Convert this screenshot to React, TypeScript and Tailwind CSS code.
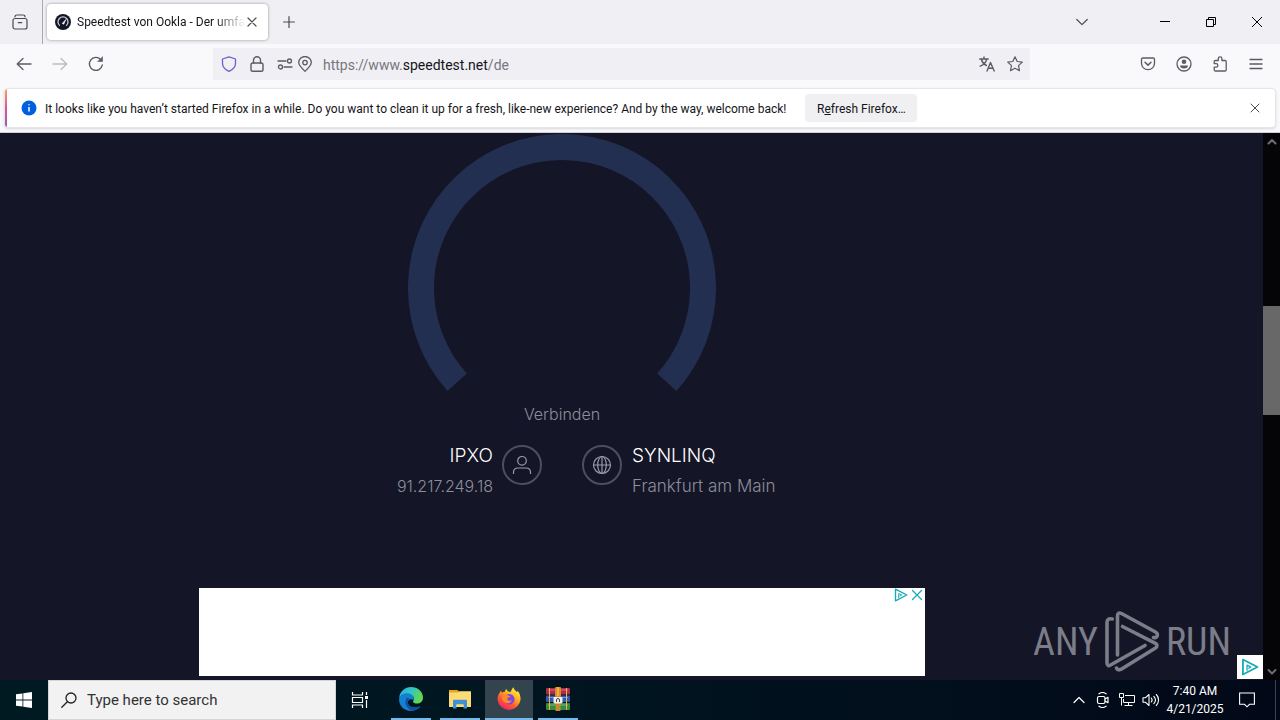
import React from "react";

type IconProps = { children: React.ReactNode; className?: string; box?: string; sw?: number };

function Icon({ children, className = "w-4 h-4", box = "0 0 16 16", sw = 1.2 }: IconProps) {
  return (
    <svg
      viewBox={box}
      className={`shrink-0 ${className}`}
      fill="none"
      stroke="currentColor"
      strokeWidth={sw}
      strokeLinecap="round"
      strokeLinejoin="round"
      aria-hidden="true"
    >
      {children}
    </svg>
  );
}

function IconButton({ label, className = "w-8 h-8", children }: { label: string; className?: string; children: React.ReactNode }) {
  return (
    <button type="button" aria-label={label} className={`flex shrink-0 items-center justify-center ${className}`}>
      {children}
    </button>
  );
}

function TabBar() {
  return (
    <header className="flex h-11 shrink-0 items-center bg-[#f0f0f4] text-[#4b4a53]">
      <IconButton label="Firefox View" className="h-11 w-10">
        <Icon sw={1.2}>
          <path d="M3 2.800C3 1.700 3.800 1 5 1h6c1.200 0 2 .7 2 1.800" />
          <rect x="1" y="4.500" width="14" height="10.500" rx="2" />
          <path d="M6.300 8.700h3.400" />
        </Icon>
      </IconButton>
      <div className="ml-0.5 h-11 w-px bg-[#a9a9b0]" />
      <div className="ml-1 flex h-9 w-[221px] items-center rounded bg-white pl-2 pr-2 shadow-[0_0_3px_rgba(0,0,0,0.4)]">
        <svg viewBox="0 0 16 16" className="h-4 w-4 shrink-0" aria-hidden="true">
          <circle cx="8" cy="8" r="8" fill="#141526" />
          <path d="M4.800 11.800A5 5 0 1 1 11.200 11.800" fill="none" stroke="#c9cad6" strokeWidth="1.300" />
          <path d="M7.200 9.400 11 5.400 8.700 10.200z" fill="#fff" stroke="#fff" strokeWidth=".6" />
        </svg>
        <span className="ml-1.5 flex-1 whitespace-nowrap text-[12px] text-[#15141a] [mask-image:linear-gradient(to_right,black_82%,transparent)]">
          Speedtest von Ookla - Der umfa
        </span>
        <button type="button" aria-label="Close tab" className="flex h-4 w-4 items-center justify-center">
          <Icon className="h-2.5 w-2.5" box="0 0 10 10">
            <path d="M1 1l8 8M9 1l-8 8" />
          </Icon>
        </button>
      </div>
      <IconButton label="New tab" className="ml-[5px] h-8 w-8">
        <Icon className="h-3 w-3" box="0 0 12 12">
          <path d="M6 .6v10.800M.6 6h10.800" />
        </Icon>
      </IconButton>
      <div className="flex-1" />
      <IconButton label="List all tabs" className="mr-11 h-8 w-8">
        <Icon className="h-3 w-3" box="0 0 12 12">
          <path d="M.8 3.500 6 8.700l5.200-5.200" />
        </Icon>
      </IconButton>
      <div className="flex text-black">
        <IconButton label="Minimize" className="h-11 w-[46px]">
          <svg viewBox="0 0 10 10" className="h-2.5 w-2.5" aria-hidden="true"><path d="M0 4.500h10" stroke="currentColor" /></svg>
        </IconButton>
        <IconButton label="Restore" className="h-11 w-[46px]">
          <svg viewBox="0 0 10 10" className="h-2.5 w-2.5" fill="none" stroke="currentColor" aria-hidden="true">
            <path d="M.5 2.500h7v7h-7zM2.500 2.500v-2h7v7h-2" />
          </svg>
        </IconButton>
        <IconButton label="Close" className="h-11 w-[46px]">
          <svg viewBox="0 0 10 10" className="h-2.5 w-2.5" stroke="currentColor" aria-hidden="true"><path d="M0 0l10 10M10 0L0 10" /></svg>
        </IconButton>
      </div>
    </header>
  );
}

function NavBar() {
  return (
    <nav className="flex h-11 shrink-0 items-center gap-1 bg-[#f9f9fb] px-2 pb-1 text-[#5b5b66]">
      <IconButton label="Back">
        <Icon sw={1.3}><path d="M15 8H1.500M7 2.500 1.200 8 7 13.500" /></Icon>
      </IconButton>
      <IconButton label="Forward" className="h-8 w-8 text-[#bcbbc2]">
        <Icon sw={1.3}><path d="M1 8h13.500M9 2.500l5.800 5.500L9 13.500" /></Icon>
      </IconButton>
      <IconButton label="Reload">
        <Icon sw={1.4}>
          <path d="M14.300 9A6.500 6.500 0 1 1 12.800 3.600" />
          <path d="M14.500 1v4.500H10z" fill="currentColor" strokeWidth=".6" />
        </Icon>
      </IconButton>
      <div className="ml-[97px] mr-[98px] flex h-8 min-w-0 flex-1 items-center bg-[#f0f0f4] pl-2 pr-[7px]">
        <Icon className="h-4 w-4 text-[#6a5fd0]" sw={1.3}>
          <path d="M8 .8 14.500 3v4.500c0 3.500-2.500 6-6.500 7.800C4 13.500 1.500 11 1.500 7.500V3z" />
        </Icon>
        <Icon className="ml-3 h-4 w-4" sw={1.4}>
          <rect x="2" y="7" width="12" height="8.300" rx="1.800" />
          <path d="M4.500 7V4.300a3.500 3.500 0 0 1 7 0V7" />
        </Icon>
        <Icon className="ml-3 h-4 w-4" sw={1.3}>
          <path d="M1 5h8M15 11H7" />
          <circle cx="12.500" cy="5" r="2" />
          <circle cx="3.500" cy="11" r="2" />
        </Icon>
        <Icon className="ml-1 h-4 w-4" sw={1.3}>
          <path d="M8 15.300C4.500 12 1.700 9.500 1.700 6.600a6.300 6.100 0 0 1 12.600 0c0 2.900-2.800 5.400-6.300 8.700z" />
          <circle cx="8" cy="6.600" r="2.200" />
        </Icon>
        <div className="relative ml-2.5 h-8 min-w-0 flex-1">
          <input aria-label="Address" defaultValue="https://www.speedtest.net/de" className="h-8 w-full bg-transparent text-[14px] text-transparent outline-none" />
          <span aria-hidden="true" className="pointer-events-none absolute inset-0 flex items-center whitespace-pre pt-0.5 text-[14px] text-[#77767e]">
            https://www.<span className="text-[#15141a]">speedtest.net</span>/de
          </span>
        </div>
        <Icon className="h-4 w-4" sw={1.4}>
          <path d="M.8 3h8.400M5 1v2M2.300 3.300C3 6 5 8.300 7.400 9.500M7.600 3.300C7 6.200 4.200 9 1.200 10.200" />
          <path d="M8 15l3.500-8.500L15.200 15M9.300 12.200h4.500" />
        </Icon>
        <Icon className="ml-3 h-4 w-4" sw={1.2}>
          <path d="M8 .8l2.200 4.700 5.100.6-3.800 3.500 1 5.100L8 12.200l-4.500 2.500 1-5.100L.7 6.100l5.100-.6z" />
        </Icon>
      </div>
      <IconButton label="Save to Pocket">
        <Icon sw={1.3}>
          <path d="M2.800 2h10.400c.8 0 1.300.5 1.300 1.300v3.900c0 3.700-2.900 6.500-6.500 6.500S1.500 10.900 1.500 7.200V3.300C1.500 2.500 2 2 2.800 2z" />
          <path d="M5 6.200l3 2.900 3-2.900" strokeWidth="1.500" />
        </Icon>
      </IconButton>
      <IconButton label="Account">
        <Icon sw={1.3}>
          <circle cx="8" cy="8" r="7" />
          <circle cx="8" cy="5.700" r="2.300" fill="currentColor" stroke="none" />
          <path d="M4 9.500h8c0 2-1.500 3-4 3s-4-1-4-3z" fill="currentColor" stroke="none" />
        </Icon>
      </IconButton>
      <IconButton label="Extensions">
        <Icon sw={1.3}>
          <path d="M6.300 4.500V2.600a1.800 1.800 0 0 1 3.600 0v1.900H13c.7 0 1.200.5 1.200 1.200v8.100c0 .7-.5 1.200-1.200 1.200H3.400c-.7 0-1.200-.5-1.200-1.200v-2.600h1.900a1.800 1.800 0 0 0 0-3.600H2.200V5.700c0-.7.5-1.200 1.200-1.200z" />
        </Icon>
      </IconButton>
      <IconButton label="Menu">
        <Icon sw={1.300}><path d="M2 3.500h12M2 8h12M2 12.500h12" /></Icon>
      </IconButton>
    </nav>
  );
}

function Notification() {
  return (
    <section className="flex h-[45px] shrink-0 border-b border-[#cfcfd8] bg-[#f9f9fb] pb-1 pl-1 pr-1">
      <div className="flex min-w-0 flex-1 items-center overflow-hidden rounded border border-[#e6e6ea] bg-white shadow-sm">
        <div className="h-full w-0.5 bg-linear-to-b from-[#f5a05c] via-[#d65596] to-[#9059c8]" />
        <svg viewBox="0 0 16 16" className="ml-3.5 h-4 w-4 shrink-0" aria-hidden="true">
          <circle cx="8" cy="8" r="7.500" fill="#0060df" />
          <path d="M8 7v4.500M8 4.300v1" stroke="#fff" strokeWidth="1.500" />
        </svg>
        <p className="ml-2 whitespace-nowrap pt-0.5 text-[12px] text-[#15141a]">
          It looks like you haven’t started Firefox in a while. Do you want to clean it up for a fresh, like-new experience? And by the way, welcome back!
        </p>
        <button type="button" className="ml-[19px] h-7 w-28 shrink-0 rounded bg-[#f0f0f2] pt-0.5 text-[12px] text-[#15141a]">
          R<u>e</u>fresh Firefox…
        </button>
        <div className="flex-1" />
        <IconButton label="Dismiss" className="mr-1 h-8 w-8 text-[#4b4a53]">
          <Icon className="h-2.5 w-2.5" box="0 0 10 10" sw={1}><path d="M1 1l8 8M9 1L1 9" /></Icon>
        </IconButton>
      </div>
    </section>
  );
}

function Scrollbar() {
  return (
    <div className="flex w-[17px] shrink-0 flex-col items-center bg-[#050507] text-[#6e6e74]">
      <Icon className="h-[17px] w-2.5" box="0 0 10 10" sw={2}><path d="M1.500 7 5 3.500 8.500 7" /></Icon>
      <div className="grow-[156]" />
      <div className="h-[109px] w-full bg-[#686868]" />
      <div className="grow-[248]" />
      <Icon className="h-[17px] w-2.5" box="0 0 10 10" sw={2}><path d="M1.500 3.500 5 7 8.500 3.500" /></Icon>
    </div>
  );
}

function AdChoices({ className }: { className: string }) {
  return (
    <svg viewBox="0 0 14 14" className={className} fill="none" stroke="#16a9b8" strokeWidth="1.400" strokeLinejoin="round" aria-hidden="true">
      <path d="M1.500 1.200 12.800 7 1.500 12.800z" />
      <path d="M4.700 10V5.500L7.700 7l-2 1.200" strokeWidth="1" />
    </svg>
  );
}

function SpeedPage() {
  return (
    <main className="relative flex min-w-0 flex-1 flex-col bg-[#141526]">
      <div className="flex flex-1 flex-col items-center pr-[139px] pt-px">
        <svg viewBox="0 0 308 258" className="h-[258px] w-[308px] shrink-0" role="img" aria-label="Speed gauge">
          <path d="M49.200 248.300A141 141 0 1 1 258.800 248.300" fill="none" stroke="#222f50" strokeWidth="26" />
        </svg>
        <p className="mt-2 text-[16px] leading-7 text-[#8d8e9c]">Verbinden</p>
        <div className="mt-3.5 grid w-full grid-cols-2 gap-10">
          <div className="flex items-start justify-end gap-[9px]">
            <div className="text-right">
              <p className="text-[19px] leading-7 text-white">IPXO</p>
              <p className="text-[16px] leading-8 text-[#8d8e9c]">91.217.249.18</p>
            </div>
            <span className="mt-[3px] flex h-10 w-10 items-center justify-center rounded-full border-2 border-[#4d4e5e] text-[#9a9ba8]">
              <Icon className="h-5 w-5" box="0 0 20 20">
                <circle cx="10" cy="5.800" r="4.300" />
                <path d="M1.500 18.500v-1.200c0-2.700 2-4.300 4.500-4.300h8c2.500 0 4.500 1.600 4.500 4.300v1.200" />
              </Icon>
            </span>
          </div>
          <div className="flex items-start gap-2.5">
            <span className="mt-[3px] flex h-10 w-10 items-center justify-center rounded-full border-2 border-[#4d4e5e] text-[#9a9ba8]">
              <Icon className="h-5 w-5" box="0 0 20 20">
                <circle cx="10" cy="10" r="8.500" />
                <ellipse cx="10" cy="10" rx="4.300" ry="8.500" />
                <path d="M1.500 10h17M10 1.500v17" />
              </Icon>
            </span>
            <div>
              <p className="text-[19px] leading-7 text-white">SYNLINQ</p>
              <p className="text-[17px] leading-8 text-[#8d8e9c]">Frankfurt am Main</p>
            </div>
          </div>
        </div>
        <div className="mb-1 mt-auto flex h-[88px] w-[726px] items-start justify-end gap-[3px] bg-white pr-0.5">
          <AdChoices className="h-3.5 w-3.5" />
          <Icon className="h-3.5 w-3 text-[#16a9b8]" box="0 0 12 14"><path d="M1.500 2.500l9 9M10.500 2.500l-9 9" /></Icon>
        </div>
      </div>
      <button type="button" aria-label="Ad options" className="absolute bottom-px right-0 flex h-6 w-[26px] items-center justify-center bg-white">
        <AdChoices className="h-[18px] w-[18px]" />
      </button>
      <div className="pointer-events-none absolute bottom-1.5 right-8 flex h-16 items-center gap-1.5 font-['Roboto_Condensed','Liberation_Sans_Narrow','Liberation_Sans',sans-serif] text-[38px] font-normal leading-none text-[#7c7d88]">
        <span>ANY</span>
        <svg viewBox="0 0 56 62" className="h-[62px] w-14" fill="none" stroke="currentColor" strokeWidth="3.600" strokeLinejoin="round" strokeLinecap="round" aria-hidden="true">
          <path d="M8.300 8C5 7 3 8.500 3 11.500V52c0 2.500 1.500 3.200 3.500 2L41 34.500" />
          <path d="M13.500 44V5c0-2.700 1.500-3.800 4-2.500L51.500 21c3.200 1.800 2 6.500-2 5.500" />
          <path d="M18.500 15.500l33 16.800c2 1 2 3.500 0 4.700L18 57.800c-2.500 1.500-4.500 1.500-5.500-.8" />
        </svg>
        <span>RUN</span>
      </div>
    </main>
  );
}

function TaskItem({ label, active = false, children }: { label: string; active?: boolean; children: React.ReactNode }) {
  return (
    <button type="button" aria-label={label} className={`flex h-10 w-12 flex-col items-center ${active ? "bg-[#34444f]" : ""}`}>
      <span className="flex h-[38px] items-center">{children}</span>
      <span className={`h-0.5 bg-[#76b9ed] ${active ? "w-12" : "w-10"}`} />
    </button>
  );
}

function Taskbar() {
  return (
    <footer className="flex h-10 shrink-0 items-center bg-linear-to-r from-[#001a22] via-[#00141f] to-[#020817] text-white">
      <button type="button" aria-label="Start" className="flex h-10 w-12 items-center justify-center">
        <svg viewBox="0 0 16 16" className="h-4 w-4" fill="#fff" aria-hidden="true">
          <path d="M0 2.300 6.500 1.400v6.100H0zM7.300 1.300 16 0v7.500H7.300zM0 8.400h6.500v6.200L0 13.700zM7.300 8.400H16V16l-8.700-1.300z" />
        </svg>
      </button>
      <label className="flex h-10 w-72 items-center border border-[#d5d5d8] bg-[#f2f2f3] pl-3 text-[#222]">
        <Icon className="h-4 w-4" sw={1.3}>
          <circle cx="10" cy="6" r="5" />
          <path d="M6.300 9.700.8 15.200" />
        </Icon>
        <input aria-label="Search" placeholder="Type here to search" className="ml-2.5 min-w-0 flex-1 bg-transparent text-[15px] outline-none placeholder:text-[#333]" />
      </label>
      <IconButton label="Task view" className="mr-[3px] h-10 w-12">
        <svg viewBox="0 0 18 16" className="h-4 w-[18px]" fill="none" stroke="#fff" strokeWidth="1.200" aria-hidden="true">
          <path d="M1.500 0v3h10V0M1.500 16v-3h10v3M1.500 5.500h10v5h-10zM15.500 0v3M15.500 8v8" />
          <path d="M14 4h3v3h-3z" fill="#fff" stroke="none" />
        </svg>
      </IconButton>
      <div className="flex gap-px">
        <TaskItem label="Microsoft Edge">
          <svg viewBox="0 0 24 24" className="h-6 w-6" aria-hidden="true">
            <defs>
              <linearGradient id="eg" x1="0" y1="0" x2="1" y2=".4">
                <stop offset="0" stopColor="#2aa9e8" /><stop offset=".5" stopColor="#2fc6c8" /><stop offset="1" stopColor="#62d84e" />
              </linearGradient>
            </defs>
            <path d="M.2 10.500C1 4.500 6 0 12 0c7 0 12 5 12 10.500 0 4-3 6-6 6-3.500 0-4.500-1.500-3.600-2.700 1.800-2.500-.5-6.300-5-6.300C5 7.500 1 9 .2 10.500z" fill="url(#eg)" />
            <path d="M.1 11.500C.5 8.500 4 6 8.500 6.200c4.500.2 7.500 3.600 5.900 7.600-1-2.500-5.500-1.800-5.500 1.800 0 4.500 6.600 6.400 12.500 3.700C19.500 22 16.200 24 12 24 5 24-.5 18.500.1 11.500z" fill="#1580d2" />
            <path d="M8 10.500c-3.500 4.500-1 11.500 5.500 13.300 3.300-.3 6.300-2 7.900-4.500-5.900 2.700-12.500.8-12.500-3.700 0-2 1-3 2-3.600z" fill="#0d519f" />
          </svg>
        </TaskItem>
        <TaskItem label="File Explorer">
          <svg viewBox="0 0 22 20" className="h-5 w-[22px]" aria-hidden="true">
            <path d="M0 1h8.500l2 2H22v5H0z" fill="#e9a520" />
            <path d="M0 3.500h9l1.500-1.300H22V18H0z" fill="#fddb74" />
            <path d="M4 19.500V12c0-.8.500-1.300 1.300-1.300h11.400c.8 0 1.300.5 1.300 1.300v7.500h-3.500v-4h-7v4z" fill="#3d92d3" />
            <path d="M7.500 15.500h7V18h-7z" fill="#fddb74" />
          </svg>
        </TaskItem>
        <TaskItem label="Firefox" active>
          <svg viewBox="0 0 24 24" className="h-6 w-6" aria-hidden="true">
            <defs>
              <linearGradient id="fx" x1=".85" y1=".05" x2=".25" y2="1">
                <stop offset="0" stopColor="#fff14a" /><stop offset=".35" stopColor="#ffb21c" /><stop offset=".65" stopColor="#ff5a32" /><stop offset="1" stopColor="#ee1f6b" />
              </linearGradient>
            </defs>
            <path d="M2.800 5.500 4 3.800l1 2C6 5 7 4.700 8 4.800c-.2-1 .5-2 1.500-2.700.2 1.800 2 2.400 3.700 3C14.500 3.500 15 1.500 16.500.2c.3 2.500 2 3.200 3.500 5 .5-.5.500-1 .4-1.600 2 2 3.200 5.400 3.200 8.600A11.600 11.600 0 0 1 .5 12.500c0-2.500.8-5 2.300-7z" fill="url(#fx)" />
            <circle cx="12.300" cy="12.300" r="5.200" fill="#7a46e8" />
            <path d="M5 10c1.500-2 4.200-2.300 6-1.500 1.300.2 2 .5 2.500 1-1 1-3 .8-3.200 2.300-.2 1.700 2.500 2.600 4.700 1.500-1 3-4 3.700-6.500 2.500S5 13 5 10z" fill="#ff8a25" />
          </svg>
        </TaskItem>
        <TaskItem label="WinRAR">
          <svg viewBox="0 0 24 24" className="h-6 w-6" aria-hidden="true">
            <rect x="0" y="1" width="24" height="6.500" rx="1" fill="#b22a48" />
            <rect x="0" y="8.500" width="24" height="6.500" rx="1" fill="#3357b5" />
            <rect x="0" y="16" width="24" height="7" rx="1" fill="#3a8a3c" />
            <path d="M2 3h20M2 10.500h20M2 18h20" stroke="#fff" strokeOpacity=".35" />
            <path d="M3.500 1v22M20.500 1v22" stroke="#e3b94b" />
            <rect x="9" y="0" width="6" height="10" rx="1" fill="#e08a22" />
            <path d="M12 0v9" stroke="#f6d37a" />
            <rect x="9.500" y="16" width="5" height="8" fill="#c08a35" />
            <rect x="7.500" y="10" width="9" height="6.500" rx="1" fill="#f1efe6" />
            <path d="M10.500 15v-2a1.500 1.500 0 0 1 3 0v2" fill="none" stroke="#444" />
          </svg>
        </TaskItem>
      </div>
      <div className="flex-1" />
      <IconButton label="Show hidden icons" className="h-10 w-6">
        <Icon className="h-3 w-3" box="0 0 12 12"><path d="M1 8.500 6 3.500l5 5" /></Icon>
      </IconButton>
      <IconButton label="Meet now" className="h-10 w-6">
        <Icon sw={1.2}>
          <rect x="2.500" y="4.500" width="7.500" height="7" rx="1.500" />
          <path d="M10 7l3-1.700v5.400L10 9M4 1.800C6 .3 9 .3 11 1.800M4 14.200c2 1.500 5 1.500 7 0" />
        </Icon>
      </IconButton>
      <IconButton label="Network" className="h-10 w-6">
        <svg viewBox="0 0 16 16" className="h-4 w-4" fill="none" stroke="#fff" aria-hidden="true">
          <path d="M6 3.500h9.500v7h-11V7M.5 1.500h4v4h-4zM2.500 5.500v8M9.500 10.500v3M5.500 13.500h8" />
        </svg>
      </IconButton>
      <IconButton label="Volume" className="h-10 w-6">
        <Icon className="h-4 w-[18px]" box="0 0 18 16" sw={1.1}>
          <path d="M1 5.800h2.300L7 2.500v11L3.300 10.200H1zM9.300 6c1 1.200 1 2.800 0 4M11.800 4.300c2 2.200 2 5.200 0 7.400M14.300 2.500c3 3.200 3 7.800 0 11" />
        </Icon>
      </IconButton>
      <div className="w-16 text-center text-[12px] leading-[18px]">
        <p>7:40 AM</p>
        <p>4/21/2025</p>
      </div>
      <IconButton label="Notifications" className="mr-2 h-10 w-10">
        <svg viewBox="0 0 16 16" className="h-4 w-4" fill="none" stroke="#fff" strokeWidth="1.100" aria-hidden="true">
          <path d="M.6 1h14.800v11.300H10.500L8 14.800l-2.500-2.500H.6z" />
        </svg>
      </IconButton>
      <div className="mr-1 h-10 w-px bg-[#3c4450]" />
    </footer>
  );
}

export default function App() {
  return (
    <div className="flex min-h-screen flex-col font-['Roboto','Noto_Sans',sans-serif]">
      <TabBar />
      <NavBar />
      <Notification />
      <div className="flex flex-1 font-['Inter',sans-serif] font-light">
        <SpeedPage />
        <Scrollbar />
      </div>
      <Taskbar />
    </div>
  );
}
